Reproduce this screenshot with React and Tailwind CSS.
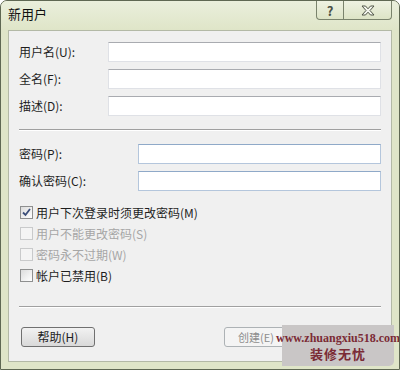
import React from "react";

const font = { fontFamily: '"Noto Sans CJK SC", "Liberation Sans", sans-serif' };

const Field = ({ label, left, blue }) => (
  <div className="flex items-center h-[20px]">
    <span className="text-[12px] text-[#1e1e1e] leading-none" style={{ width: left }}>
      {label}
    </span>
    <div
      className={
        "flex-1 h-[20px] bg-white border " +
        (blue
          ? "border-[#b4c6dc] border-t-[#8fa9c8]"
          : "border-[#dfe1e6] border-t-[#a9abb0]")
      }
    />
  </div>
);

const Check = ({ label, checked, disabled }) => (
  <div className="flex items-center h-[13px]">
    <div
      className={
        "w-[13px] h-[13px] border flex items-center justify-center " +
        (disabled
          ? "border-[#c9cacb] bg-[#f4f4f4]"
          : "border-[#8e8f8f] bg-gradient-to-br from-[#dcdcdc] to-white")
      }
    >
      {checked && (
        <svg width="9" height="9" viewBox="0 0 9 9">
          <path d="M1 4.5 L3.5 7 L8 1" fill="none" stroke="#3c4f7a" strokeWidth="1.8" />
        </svg>
      )}
    </div>
    <span
      className={
        "ml-[3px] text-[12px] leading-none " +
        (disabled ? "text-[#a6a6a6]" : "text-[#1e1e1e]")
      }
    >
      {label}
    </span>
  </div>
);

const Separator = () => (
  <div className="mx-[10px] border-t border-[#a0a0a0] border-b-white border-b" />
);

export default function App() {
  return (
    <div
      className="relative w-[400px] h-[370px] overflow-hidden bg-[#dfe5c8] border border-[#5f6853] rounded-t-[7px] flex flex-col"
      style={font}
    >
      {/* title bar */}
      <div className="h-[29px] flex items-start bg-gradient-to-b from-[#eaefdc] to-[#dfe5c8]">
        <span className="pl-[7px] pt-[6px] text-[13px] text-[#111] leading-none">新用户</span>
        <div className="ml-auto mr-[7px] flex">
          <div className="w-[28px] h-[19px] border border-t-0 border-[#7a836c] rounded-bl-[4px] bg-gradient-to-b from-[#eef2e2] to-[#dde4c6] flex items-center justify-center">
            <span className="text-[13px] font-bold text-[#4a4f44] leading-none">?</span>
          </div>
          <div className="w-[48px] h-[19px] border border-t-0 border-l-0 border-[#7a836c] rounded-br-[4px] bg-gradient-to-b from-[#eef2e2] to-[#dde4c6] flex items-center justify-center">
            <svg width="14" height="11" viewBox="0 0 14 11">
              <path
                d="M1 1 H4.5 L7 3.8 L9.5 1 H13 L9 5.5 L13 10 H9.5 L7 7.2 L4.5 10 H1 L5 5.5 Z"
                fill="#f4f6ee"
                stroke="#4f5547"
                strokeWidth="1"
                strokeLinejoin="round"
              />
            </svg>
          </div>
        </div>
      </div>

      {/* client area */}
      <div className="mx-[7px] h-[332px] bg-[#f0f0f0] border border-[#b3b9a6] flex flex-col">
        <div className="pl-[10px] pr-[10px] pt-[11px] flex flex-col gap-[7px]">
          <Field label="用户名(U):" left={89} />
          <Field label="全名(F):" left={89} />
          <Field label="描述(D):" left={89} />
        </div>
        <div className="mt-[13px]">
          <Separator />
        </div>
        <div className="pl-[10px] pr-[10px] pt-[13px] flex flex-col gap-[7px]">
          <Field label="密码(P):" left={119} blue />
          <Field label="确认密码(C):" left={119} blue />
        </div>
        <div className="pl-[11px] pt-[15px] flex flex-col gap-[8px]">
          <Check label="用户下次登录时须更改密码(M)" checked />
          <Check label="用户不能更改密码(S)" disabled />
          <Check label="密码永不过期(W)" disabled />
          <Check label="帐户已禁用(B)" />
        </div>
        <div className="mt-[24px]">
          <Separator />
        </div>
        <div className="pl-[12px] pt-[19px] flex items-center">
          <div className="w-[74px] h-[20px] border border-[#707070] rounded-[3px] bg-gradient-to-b from-[#f2f2f2] to-[#d9d9d9] flex items-center justify-center">
            <span className="text-[12px] text-[#1e1e1e] leading-none">帮助(H)</span>
          </div>
          <div className="ml-[129px] w-[74px] h-[20px] border border-[#adb2b5] rounded-[3px] bg-[#f4f4f4] flex items-center pl-[13px]">
            <span className="text-[11px] text-[#8d8d8d] leading-none">创建(E)</span>
          </div>
        </div>
      </div>

      {/* watermark overlay */}
      <div className="absolute left-[281px] top-[324px] w-[112px] h-[41px] bg-[#c9c6c6] rounded-br-[5px] flex flex-col items-center justify-center gap-[3px]">
        <span
          className="text-[12px] font-bold text-[#7b2b35] leading-none"
          style={{ fontFamily: '"Liberation Serif", serif' }}
        >
          www.zhuangxiu518.com
        </span>
        <span
          className="text-[13px] font-bold text-[#7b2b35] leading-none tracking-[1px]"
          style={{ fontFamily: '"Noto Sans CJK SC", serif' }}
        >
          装修无忧
        </span>
      </div>
    </div>
  );
}
